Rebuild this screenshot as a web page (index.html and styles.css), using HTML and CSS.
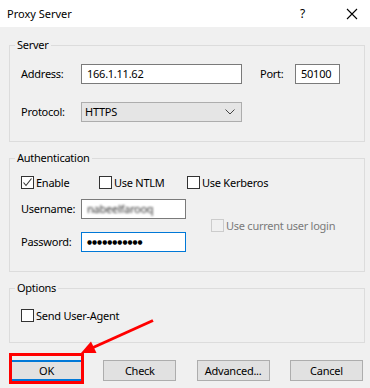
FILE: index.html
```html
<!DOCTYPE html>
<html>
<head>
<meta charset="utf-8">
<link rel="stylesheet" href="styles.css">
</head>
<body>
<div class="window">
  <div class="titlebar">
    <span class="title">Proxy Server</span>
    <span class="help">?</span>
    <span class="close"><svg width="12" height="12" viewBox="0 0 12 12"><path d="M1 1L11 11M11 1L1 11" stroke="#000" stroke-width="1.1" fill="none"/></svg></span>
  </div>
  <div class="body">
    <fieldset class="group server">
      <legend>Server</legend>
      <div class="gbody server-body">
        <div class="row">
          <span class="lbl">Address:</span>
          <div class="input addr">166.1.11.62</div>
          <span class="lbl port-lbl">Port:</span>
          <div class="input port">50100</div>
        </div>
        <div class="row">
          <span class="lbl">Protocol:</span>
          <div class="combo"><span>HTTPS</span><svg class="chev" width="10" height="6" viewBox="0 0 10 6"><path d="M0.5 0.5L5 5L9.5 0.5" stroke="#444" stroke-width="1" fill="none"/></svg></div>
        </div>
      </div>
    </fieldset>

    <fieldset class="group auth">
      <legend>Authentication</legend>
      <div class="gbody auth-body">
        <div class="checks">
          <label class="chk c-enable"><span class="box"><svg width="11" height="11" viewBox="0 0 11 11"><path d="M1.5 5.5L4 8.5L9.5 1.5" stroke="#333" stroke-width="1.1" fill="none"/></svg></span>Enable</label>
          <label class="chk c-ntlm"><span class="box"></span>Use NTLM</label>
          <label class="chk c-kerb"><span class="box"></span>Use Kerberos</label>
        </div>
        <div class="creds">
          <div class="cred-rows">
            <div class="row">
              <span class="lbl">Username:</span>
              <div class="input user"><span class="blur">nabeelfarooq</span></div>
            </div>
            <div class="row">
              <span class="lbl">Password:</span>
              <div class="input pass focused"><span class="dots">●●●●●●●●●●●</span></div>
            </div>
          </div>
          <label class="chk disabled"><span class="box"></span>Use current user login</label>
        </div>
      </div>
    </fieldset>

    <fieldset class="group options">
      <legend>Options</legend>
      <div class="gbody options-body">
        <label class="chk"><span class="box"></span>Send User-Agent</label>
      </div>
    </fieldset>

    <div class="buttons">
      <button class="btn default">OK</button>
      <button class="btn">Check</button>
      <button class="btn">Advanced...</button>
      <button class="btn">Cancel</button>
    </div>
  </div>

  <div class="highlight"></div>
  <svg class="arrow" width="370" height="388" viewBox="0 0 370 388">
    <line x1="153" y1="320.5" x2="92" y2="348" stroke="#ff0000" stroke-width="3"/>
    <polygon points="81,353 96.5,353 91,341.5" fill="#ff0000"/>
  </svg>
</div>
</body>
</html>
```
FILE: styles.css
```css
* { box-sizing: border-box; }
html, body { margin: 0; padding: 0; }
body {
  width: 370px;
  height: 388px;
  overflow: hidden;
  font-family: "Noto Sans", "Open Sans", sans-serif;
  font-size: 11px;
  letter-spacing: -0.25px;
  color: #000;
  background: #f0f0f0;
}
.window {
  position: relative;
  width: 370px;
  height: 388px;
  background: #f0f0f0;
}
.titlebar {
  height: 27px;
  background: #fff;
  display: flex;
  align-items: center;
  padding-left: 7px;
}
.title { flex: 1; font-size: 11px; letter-spacing: 0; line-height: 16px; }
.help { width: 12px; margin-right: 34px; font-size: 12px; line-height: 16px; }
.close { width: 12px; height: 12px; margin-right: 12px; display: flex; }

.body { padding-left: 9px; }

.group {
  width: 356px;
  margin: 0;
  padding: 0;
  border: 1px solid #dcdcdc;
  min-width: 0;
}
.group legend {
  margin-left: 5px;
  padding: 0 2px;
  line-height: 16px;
  font-size: 11px;
}
.server { margin-top: 10px; }
.auth, .options { margin-top: 8px; }

.gbody { padding-left: 11px; }
.server-body { padding-top: 11px; padding-bottom: 19px; display: flex; flex-direction: column; gap: 18px; }

.row { display: flex; align-items: center; height: 20px; }
.lbl { width: 60px; flex: none; line-height: 16px; }
.port-lbl { width: 35px; margin-left: 18px; }

.input {
  height: 20px;
  background: #fff;
  border: 1px solid #7a7a7a;
  padding-left: 5px;
  display: flex;
  align-items: center;
  line-height: 16px;
  overflow: hidden;
}
.input.focused { border-color: #0078d7; }
.addr { width: 161px; }
.port { width: 45px; }
.user, .pass { width: 105px; }

.combo {
  width: 161px;
  height: 20px;
  background: #e5e5e5;
  border: 1px solid #adadad;
  display: flex;
  align-items: center;
  justify-content: space-between;
  padding: 0 6px 0 3px;
  line-height: 16px;
}
.chev { display: block; }

.auth-body { padding-top: 9px; padding-bottom: 19px; }
.checks { display: flex; height: 15px; align-items: center; }
.chk { display: flex; align-items: center; line-height: 15px; white-space: nowrap; }
.box {
  width: 13px;
  height: 13px;
  border: 1px solid #333;
  background: #fff;
  margin-right: 2px;
  display: flex;
  align-items: center;
  justify-content: center;
  flex: none;
}
.c-enable { width: 78px; }
.c-ntlm { width: 88px; }

.creds { display: flex; align-items: center; margin-top: 9px; }
.cred-rows { display: flex; flex-direction: column; gap: 13px; }
.creds .chk { margin-left: 25px; }
.chk.disabled { color: #7a7a7a; }
.chk.disabled .box { border-color: #cccccc; background: #f0f0f0; }

.blur { color: #333; filter: blur(1.3px); font-size: 11px; }
.dots {
  font-family: "DejaVu Sans", sans-serif;
  font-size: 5.8px;
  letter-spacing: 0;
  color: #000;
}

.options-body { padding-top: 12px; padding-bottom: 19px; }
.options-body .chk { height: 15px; }

.buttons {
  display: flex;
  justify-content: space-between;
  width: 353px;
  margin-top: 17px;
  margin-left: 1px;
}
.btn {
  width: 73px;
  height: 21px;
  background: #e1e1e1;
  border: 1px solid #adadad;
  font-family: "Noto Sans", "Open Sans", sans-serif;
  font-size: 11px;
  letter-spacing: -0.25px;
  color: #000;
  padding: 0;
  line-height: 16px;
}
.btn.default { border: 2px solid #0078d7; }

.highlight {
  position: absolute;
  left: 9px;
  top: 353px;
  width: 75px;
  height: 31px;
  border: 3px solid #ff0000;
}
.arrow { position: absolute; left: 0; top: 0; pointer-events: none; }
```
